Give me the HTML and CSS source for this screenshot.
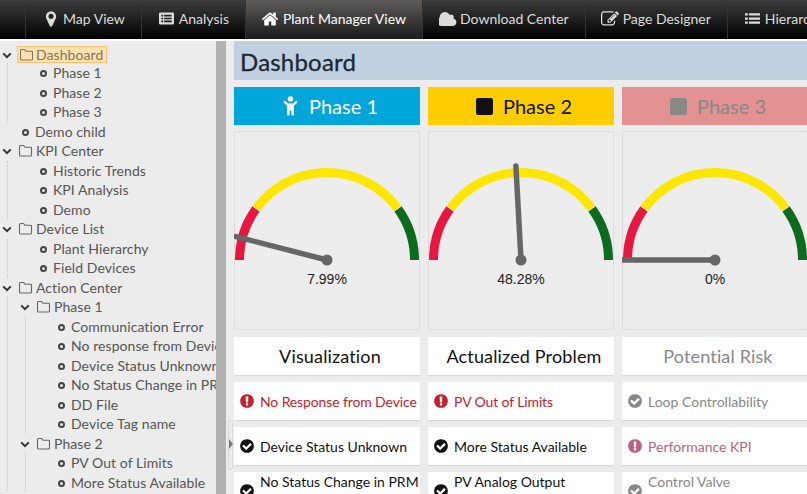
FILE: index.html
```html
<!DOCTYPE html>
<html lang="en">
<head>
    <meta charset="UTF-8">
    <meta name="viewport" content="width=device-width, initial-scale=1.0">
    <title>Plant Manager View</title>
    <link rel="stylesheet" href="styles.css">
</head>
<body>
    <!-- icon set -->
    <svg class="icon-defs" aria-hidden="true">
        <symbol id="i-marker" viewBox="0 0 1792 1792"><path d="M1152 640q0-106-75-181t-181-75-181 75-75 181 75 181 181 75 181-75 75-181zm256 0q0 109-33 179l-364 774q-16 33-47.500 52t-67.500 19-67.500-19-46.500-52l-365-774q-33-70-33-179 0-212 150-362t362-150 362 150 150 362z"/></symbol>
        <symbol id="i-listalt" viewBox="0 0 16 16"><path fill-rule="evenodd" d="M1.500 1.500h13a1.500 1.500 0 0 1 1.500 1.500v10a1.500 1.500 0 0 1-1.500 1.500h-13a1.500 1.500 0 0 1-1.500-1.500v-10a1.500 1.500 0 0 1 1.500-1.500zM2.500 4v1.800h2v-1.800zM5.500 4v1.800h8v-1.800zM2.500 7.100v1.800h2v-1.800zM5.500 7.100v1.800h8v-1.800zM2.500 10.200v1.800h2v-1.800zM5.500 10.200v1.800h8v-1.800z"/></symbol>
        <symbol id="i-home" viewBox="0 0 1792 1792"><path d="M1472 992v480q0 26-19 45t-45 19h-384v-384h-256v384h-384q-26 0-45-19t-19-45v-480q0-1 .5-3t.5-3l575-474 575 474q1 2 1 6zm223-69l-62 74q-8 9-21 11h-3q-13 0-21-7l-692-577-692 577q-12 8-24 7-13-2-21-11l-62-74q-8-10-7-23.500t11-21.500l719-599q32-26 76-26t76 26l244 204v-195q0-14 9-23t23-9h192q14 0 23 9t9 23v408l219 182q10 8 11 21.500t-7 23.500z"/></symbol>
        <symbol id="i-cloud" viewBox="0 0 1792 1792"><path d="M1728 1216q0 159-112.500 271.500t-271.500 112.500h-1088q-185 0-316.500-131.500t-131.500-316.500q0-132 71-241.500t187-163.500q-2-28-2-43 0-212 150-362t362-150q158 0 286.500 88t187.500 230q70-62 166-62 106 0 181 75t75 181q0 75-41 138 129 30 213 134.500t84 239.500z"/></symbol>
        <symbol id="i-edit" viewBox="0 0 1792 1792"><path d="M888 1184l116-116-152-152-116 116v56h96v96h56zm440-720q-16-16-33 1l-350 350q-17 17-1 33t33-1l350-350q17-17 1-33zm80 594v190q0 119-84.500 203.500t-203.500 84.500h-832q-119 0-203.500-84.500t-84.500-203.500v-832q0-119 84.500-203.500t203.500-84.500h832q63 0 117 25 15 7 18 23 3 17-9 29l-49 49q-14 14-32 8-23-6-45-6h-832q-66 0-113 47t-47 113v832q0 66 47 113t113 47h832q66 0 113-47t47-113v-126q0-13 9-22l64-64q15-15 35-7t20 29zm-96-738l288 288-672 672h-288v-288zm444 132l-92 92-288-288 92-92q28-28 68-28t68 28l152 152q28 28 28 68t-28 68z"/></symbol>
        <symbol id="i-list" viewBox="0 0 16 16"><path d="M0 2.500h3v2.400h-3zM4.200 2.500h11.800v2.400h-11.800zM0 6.800h3v2.400h-3zM4.200 6.800h11.800v2.400h-11.800zM0 11.100h3v2.400h-3zM4.200 11.100h11.800v2.400h-11.800z"/></symbol>
        <symbol id="i-check" viewBox="0 0 1792 1792"><path d="M1412 734q0-28-18-46l-91-90q-19-19-45-19t-45 19l-408 407-226-226q-19-19-45-19t-45 19l-91 90q-18 18-18 46 0 27 18 45l362 362q19 19 45 19 27 0 46-19l543-543q18-18 18-45zm252 162q0 209-103 385.500t-279.500 279.500-385.500 103-385.500-103-279.500-279.500-103-385.500 103-385.500 279.500-279.500 385.500-103 385.500 103 279.500 279.500 103 385.500z"/></symbol>
        <symbol id="i-alert" viewBox="0 0 1792 1792"><path d="M896 128q209 0 385 103t279 279 103 386-103 386-279 279-385 103-385-103-279-279-103-386 103-386 279-279 385-103zm128 1247v-190q0-14-9-23.500t-22-9.500h-192q-13 0-23 10t-10 23v190q0 13 10 23t23 10h192q13 0 22-9.500t9-23.500zm-2-344l18-621q0-12-10-18-10-8-24-8h-220q-14 0-24 8-10 6-10 18l17 621q0 10 10 17.500t24 7.500h185q14 0 23.500-7.500t10.500-17.500z"/></symbol>
        <symbol id="i-child" viewBox="0 0 16 20"><circle cx="8" cy="3" r="2.700"/><path d="M1.300 5.300a1.100 1.100 0 0 1 1.600-.2l2.600 2.400h5l2.600-2.400a1.100 1.100 0 0 1 1.500 1.600l-3.100 3v8.500a1.300 1.300 0 0 1-2.600 0v-3.700h-1.800v3.700a1.300 1.300 0 0 1-2.600 0v-8.500l-3.100-3a1.100 1.100 0 0 1-.1-1.400z"/></symbol>
        <symbol id="i-folder" viewBox="0 0 15 13"><path d="M1.500 2.500a1 1 0 0 1 1-1h3l1.500 1.700h5.500a1 1 0 0 1 1 1v6.800a1 1 0 0 1-1 1h-10a1 1 0 0 1-1-1z" fill="none" stroke="currentColor" stroke-width="1.100"/></symbol>
        <symbol id="i-chevron" viewBox="0 0 10 7"><path d="M1.200 1.400l3.800 3.800 3.800-3.800" fill="none" stroke="currentColor" stroke-width="2"/></symbol>
        <symbol id="gauge-arc" viewBox="0 0 186 199">
            <path d="M5.500 129A87.500 87.500 0 0 1 22.200 77.600" fill="none" stroke="#e8173f" stroke-width="9"/>
            <path d="M22.200 77.600A87.500 87.500 0 0 1 163.800 77.600" fill="none" stroke="#fde600" stroke-width="9"/>
            <path d="M163.800 77.600A87.500 87.500 0 0 1 180.500 129" fill="none" stroke="#0d6b20" stroke-width="9"/>
            <path d="M18.500 75l7.500 5.400M167.500 75l-7.500 5.400" stroke="#fff" stroke-width=".8"/>
        </symbol>
    </svg>

    <nav class="topnav">
        <a class="nav-item"><svg class="nav-icon large"><use href="#i-marker"/></svg>Map View</a>
        <a class="nav-item"><svg class="nav-icon"><use href="#i-listalt"/></svg>Analysis</a>
        <a class="nav-item active"><svg class="nav-icon large"><use href="#i-home"/></svg>Plant Manager View</a>
        <a class="nav-item"><svg class="nav-icon large"><use href="#i-cloud"/></svg>Download Center</a>
        <a class="nav-item"><svg class="nav-icon large"><use href="#i-edit"/></svg>Page Designer</a>
        <a class="nav-item"><svg class="nav-icon"><use href="#i-list"/></svg>Hierarchy</a>
    </nav>

    <div class="layout">
        <aside class="sidebar">
            <ul class="tree">
                <li>
                    <div class="node first"><svg class="chevron"><use href="#i-chevron"/></svg><span class="selected"><svg class="folder"><use href="#i-folder"/></svg>Dashboard</span></div>
                    <ul>
                        <li class="leaf">Phase 1</li>
                        <li class="leaf">Phase 2</li>
                        <li class="leaf">Phase 3</li>
                    </ul>
                </li>
                <li class="leaf">Demo child</li>
                <li>
                    <div class="node"><svg class="chevron"><use href="#i-chevron"/></svg><svg class="folder"><use href="#i-folder"/></svg>KPI Center</div>
                    <ul>
                        <li class="leaf">Historic Trends</li>
                        <li class="leaf">KPI Analysis</li>
                        <li class="leaf">Demo</li>
                    </ul>
                </li>
                <li>
                    <div class="node"><svg class="chevron"><use href="#i-chevron"/></svg><svg class="folder"><use href="#i-folder"/></svg>Device List</div>
                    <ul>
                        <li class="leaf">Plant Hierarchy</li>
                        <li class="leaf">Field Devices</li>
                    </ul>
                </li>
                <li>
                    <div class="node"><svg class="chevron"><use href="#i-chevron"/></svg><svg class="folder"><use href="#i-folder"/></svg>Action Center</div>
                    <ul>
                        <li>
                            <div class="node"><svg class="chevron"><use href="#i-chevron"/></svg><svg class="folder"><use href="#i-folder"/></svg>Phase 1</div>
                            <ul>
                                <li class="leaf">Communication Error</li>
                                <li class="leaf">No response from Device</li>
                                <li class="leaf">Device Status Unknown</li>
                                <li class="leaf">No Status Change in PRM</li>
                                <li class="leaf">DD File</li>
                                <li class="leaf">Device Tag name</li>
                            </ul>
                        </li>
                        <li>
                            <div class="node"><svg class="chevron"><use href="#i-chevron"/></svg><svg class="folder"><use href="#i-folder"/></svg>Phase 2</div>
                            <ul>
                                <li class="leaf">PV Out of Limits</li>
                                <li class="leaf">More Status Available</li>
                            </ul>
                        </li>
                    </ul>
                </li>
            </ul>
        </aside>
        <div class="scrollbar"></div>
        <div class="splitter"><span class="handle"></span></div>

        <main class="content">
            <h1 class="page-title">Dashboard</h1>
            <div class="columns">
                <section class="column">
                    <div class="phase phase-blue"><svg class="phase-icon"><use href="#i-child"/></svg>Phase 1</div>
                    <div class="gauge-card">
                        <svg class="gauge" viewBox="0 0 186 199">
                            <use href="#gauge-arc" width="186" height="199"/>
                            <line class="needle" x1="93" y1="129" x2="2" y2="105.600"/>
                            <circle class="hub" cx="93" cy="129" r="5.500"/>
                            <text class="gauge-value" x="93" y="153">7.99%</text>
                        </svg>
                    </div>
                    <div class="col-title">Visualization</div>
                    <div class="item red"><svg class="item-icon"><use href="#i-alert"/></svg>No Response from Device</div>
                    <div class="item"><svg class="item-icon"><use href="#i-check"/></svg>Device Status Unknown</div>
                    <div class="item tall"><svg class="item-icon"><use href="#i-check"/></svg><span>No Status Change in PRM</span></div>
                </section>

                <section class="column">
                    <div class="phase phase-yellow"><span class="phase-square"></span>Phase 2</div>
                    <div class="gauge-card">
                        <svg class="gauge" viewBox="0 0 186 199">
                            <use href="#gauge-arc" width="186" height="199"/>
                            <line class="needle" x1="93" y1="129" x2="87.900" y2="35.100"/>
                            <circle class="hub" cx="93" cy="129" r="5.500"/>
                            <text class="gauge-value" x="93" y="153">48.28%</text>
                        </svg>
                    </div>
                    <div class="col-title">Actualized Problem</div>
                    <div class="item red"><svg class="item-icon"><use href="#i-alert"/></svg>PV Out of Limits</div>
                    <div class="item"><svg class="item-icon"><use href="#i-check"/></svg>More Status Available</div>
                    <div class="item tall"><svg class="item-icon"><use href="#i-check"/></svg><span>PV Analog Output</span></div>
                </section>

                <section class="column muted">
                    <div class="phase phase-pink"><span class="phase-square"></span>Phase 3</div>
                    <div class="gauge-card">
                        <svg class="gauge" viewBox="0 0 186 199">
                            <use href="#gauge-arc" width="186" height="199"/>
                            <line class="needle" x1="93" y1="129" x2="-2" y2="129"/>
                            <circle class="hub" cx="93" cy="129" r="5.500"/>
                            <text class="gauge-value" x="93" y="153">0%</text>
                        </svg>
                    </div>
                    <div class="col-title">Potential Risk</div>
                    <div class="item"><svg class="item-icon"><use href="#i-check"/></svg>Loop Controllability</div>
                    <div class="item rose"><svg class="item-icon"><use href="#i-alert"/></svg>Performance KPI</div>
                    <div class="item tall"><svg class="item-icon"><use href="#i-check"/></svg><span>Control Valve</span></div>
                </section>
            </div>
        </main>
    </div>
</body>
</html>
```

FILE: styles.css
```css
* {
    box-sizing: border-box;
}

html, body {
    margin: 0;
    height: 100%;
    overflow: hidden;
}

body {
    font-family: Lato, "Open Sans", sans-serif;
    font-size: 14px;
    background: #fff;
    display: flex;
    flex-direction: column;
}

.icon-defs {
    position: absolute;
    width: 0;
    height: 0;
}

svg {
    fill: currentColor;
}

/* top bar */
.topnav {
    flex: none;
    height: 41px;
    display: flex;
    padding-left: 25px;
    border-bottom: 2px solid #fff;
    background: linear-gradient(to bottom, #3d3d3d, #000);
    overflow: hidden;
}

.nav-item {
    flex: none;
    display: flex;
    align-items: center;
    gap: 5px;
    padding: 0 16px 2px 17px;
    border-left: 1px solid #333;
    color: #dcdcdc;
    font-size: 14px;
    white-space: nowrap;
}

.nav-item.active {
    background: linear-gradient(to bottom, #5e5c5a, #1b1b1b);
    color: #fff;
}

.nav-icon {
    width: 15px;
    height: 15px;
}

.nav-icon.large {
    width: 18px;
    height: 18px;
    margin: 0 -1.5px;
}

/* main layout */
.layout {
    flex: 1;
    min-height: 0;
    display: flex;
    background: #ececec;
}

.sidebar {
    flex: none;
    width: 216px;
    padding-top: 4px;
    overflow: hidden;
}

.scrollbar {
    flex: none;
    width: 10px;
    background: #b1b1b1;
}

.splitter {
    flex: none;
    width: 8px;
    position: relative;
}

.handle {
    position: absolute;
    left: 2px;
    top: 379px;
    width: 5px;
    height: 50px;
    border: 1px solid #dadada;
    border-radius: 3px;
}

.handle::after {
    content: "";
    position: absolute;
    left: 0;
    top: 18px;
    border-left: 4px solid #777;
    border-top: 5px solid transparent;
    border-bottom: 5px solid transparent;
}

/* tree */
.tree, .tree ul {
    list-style: none;
    margin: 0;
    padding: 0;
    color: #555;
    white-space: nowrap;
    letter-spacing: .07px;
}

.tree ul {
    margin-left: 7px;
    padding-left: 10px;
    border-left: 1px dotted #c4c4c4;
}

.node, .leaf {
    height: 19.5px;
    line-height: 19.5px;
}

.node {
    display: flex;
    align-items: center;
}

.node.first {
    height: 18px;
}

.leaf {
    position: relative;
    padding-left: 35px;
}

.leaf::before {
    content: "";
    position: absolute;
    left: 22px;
    top: 7px;
    width: 3px;
    height: 3px;
    border: 2px solid #444;
    border-radius: 50%;
}

.chevron {
    flex: none;
    width: 10px;
    height: 7px;
    margin: 2px 1px 0 2px;
    color: #333;
}

.folder {
    flex: none;
    width: 15px;
    height: 13px;
    margin-left: 5px;
    margin-right: 3px;
    color: #666;
}

.selected {
    display: flex;
    align-items: center;
    flex: none;
    height: 17px;
    width: 90px;
    margin: 1px 0 0 4px;
    background: #fde2b4;
    border: 1px solid #fbc36c;
    color: #8b7355;
}

.selected .folder {
    margin-left: 1px;
    margin-right: 2px;
    color: #8b7355;
}

/* dashboard */
.content {
    flex: none;
    width: 580px;
    overflow: hidden;
}

.page-title {
    margin: 0;
    height: 39px;
    padding-left: 6px;
    background: #c1d0e0;
    color: #1b2733;
    font-size: 24px;
    font-weight: 400;
    letter-spacing: .2px;
    -webkit-text-stroke: .3px #1b2733;
    line-height: 41px;
}

.columns {
    display: grid;
    grid-template-columns: 186px 186px 186px;
    gap: 8px;
    margin-top: 7px;
}

.column {
    display: flex;
    flex-direction: column;
    gap: 7px;
}

.phase {
    height: 38px;
    display: flex;
    align-items: center;
    justify-content: center;
    gap: 10px;
    padding-left: 6px;
    font-size: 20px;
}

.phase-blue {
    background: #00a6d9;
    color: #fff;
}

.phase-yellow {
    background: #ffcd00;
    color: #111;
}

.phase-pink {
    background: #e39191;
    color: #888;
}

.phase-icon {
    width: 17px;
    height: 20px;
}

.phase-square {
    width: 17px;
    height: 17px;
    border-radius: 2px;
    background: currentColor;
}

.gauge-card {
    height: 199px;
    margin-top: -1px;
    background: #ededed;
    border-radius: 3px;
    box-shadow: inset 0 0 0 1px #dcdcdc;
}

.gauge {
    display: block;
    width: 186px;
    height: 199px;
}

.needle {
    stroke: #666;
    stroke-width: 5.5;
    stroke-linecap: round;
}

.hub {
    fill: #666;
}

.gauge-value {
    font-family: "Liberation Sans", sans-serif;
    font-size: 14px;
    text-anchor: middle;
    fill: #222;
}

.col-title {
    height: 38px;
    line-height: 38px;
    padding-left: 6px;
    text-align: center;
    background: #fff;
    font-size: 18px;
    letter-spacing: .15px;
    color: #111;
    box-shadow: 0 1px 1px #d8d8d8;
}

.item {
    height: 38px;
    display: flex;
    align-items: center;
    gap: 5px;
    padding-left: 5px;
    background: #fff;
    color: #111;
    white-space: nowrap;
    overflow: hidden;
    box-shadow: 0 1px 1px #d8d8d8;
}

.item-icon {
    flex: none;
    width: 16px;
    height: 16px;
}

.item.red {
    color: #c5202e;
    letter-spacing: -.12px;
}

.item.tall span {
    align-self: flex-start;
    line-height: 20px;
}

.muted .col-title, .muted .item {
    color: #888;
}

.muted .item.rose {
    color: #c05f7e;
}
```
